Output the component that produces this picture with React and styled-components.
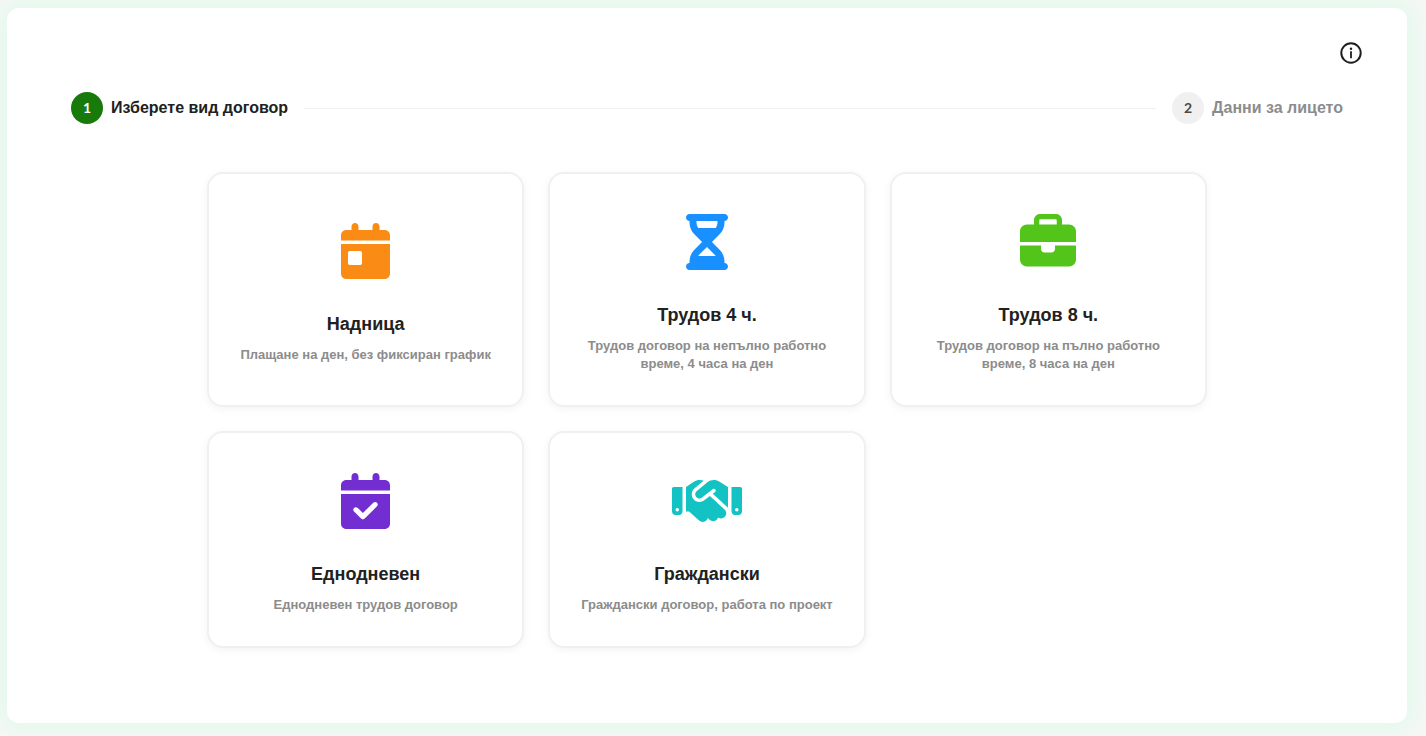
import styled, { createGlobalStyle } from 'styled-components';
import { useState } from 'react';
import {
  FaBriefcase,
  FaCalendarCheck,
  FaCalendarDay,
  FaHandshake,
  FaHourglassHalf,
} from 'react-icons/fa6';

const STEPS = ['Изберете вид договор', 'Данни за лицето'];

const CONTRACTS = [
  {
    id: 'daily-wage',
    title: 'Надница',
    description: 'Плащане на ден, без фиксиран график',
    color: '#fa8c16',
    icon: FaCalendarDay,
    iconWidth: 49,
  },
  {
    id: 'part-time',
    title: 'Трудов 4 ч.',
    description: 'Трудов договор на непълно работно време, 4 часа на ден',
    color: '#1890ff',
    icon: FaHourglassHalf,
    iconWidth: 42,
  },
  {
    id: 'full-time',
    title: 'Трудов 8 ч.',
    description: 'Трудов договор на пълно работно време, 8 часа на ден',
    color: '#52c41a',
    icon: FaBriefcase,
    iconWidth: 56,
  },
  {
    id: 'one-day',
    title: 'Еднодневен',
    description: 'Еднодневен трудов договор',
    color: '#722ed1',
    icon: FaCalendarCheck,
    iconWidth: 49,
  },
  {
    id: 'civil',
    title: 'Граждански',
    description: 'Граждански договор, работа по проект',
    color: '#13c2c2',
    icon: FaHandshake,
    iconWidth: 70,
  },
];

export default function App() {
  const [contract, setContract] = useState(null);

  return (
    <>
      <GlobalStyle />
      <Page>
        <Panel>
          <PanelHeader>
            <InfoButton type="button" aria-label="Информация">
              <InfoIcon />
            </InfoButton>
          </PanelHeader>

          <Steps>
            {STEPS.map((step, index) => (
              <Step key={step} $active={index === 0}>
                <StepNumber $active={index === 0}>{index + 1}</StepNumber>
                {step}
              </Step>
            ))}
          </Steps>

          <Cards>
            {CONTRACTS.map((item) => {
              const Icon = item.icon;

              return (
                <Card
                  key={item.id}
                  type="button"
                  aria-pressed={contract === item.id}
                  onClick={() => setContract(item.id)}
                >
                  <CardIcon $color={item.color} $width={item.iconWidth}>
                    <Icon />
                  </CardIcon>
                  <CardTitle>{item.title}</CardTitle>
                  <CardText>{item.description}</CardText>
                </Card>
              );
            })}
          </Cards>
        </Panel>
      </Page>
    </>
  );
}

function InfoIcon() {
  return (
    <svg viewBox="0 0 24 24" width="24" height="24" fill="none" aria-hidden="true">
      <circle cx="12" cy="12" r="9.7" stroke="currentColor" strokeWidth="2" />
      <circle cx="12" cy="7.7" r="1.2" fill="currentColor" />
      <path d="M12 10.2v7" stroke="currentColor" strokeWidth="1.8" />
    </svg>
  );
}

const GlobalStyle = createGlobalStyle`
  * {
    box-sizing: border-box;
  }

  body {
    margin: 0;
    background-color: #f6f7f6;
    color: #212121;
    font-family: 'Liberation Sans', Arial, sans-serif;
  }
`;

const Page = styled.main`
  min-height: 100vh;
  padding: 8px 19px 13px 7px;
  overflow: hidden;
`;

const Panel = styled.section`
  max-width: 1400px;
  padding: 33px 64px 75px;
  border-radius: 12px;
  background-color: #fff;
  box-shadow: 0 0 24px 6px #e0faea;
`;

const PanelHeader = styled.header`
  display: flex;
  justify-content: flex-end;
  margin: 0 -20px 27px 0;
`;

const InfoButton = styled.button`
  display: flex;
  padding: 0;
  border: none;
  background: none;
  color: #1f1f1f;
  cursor: pointer;
`;

const Steps = styled.ol`
  display: flex;
  margin: 0 0 48px;
  padding: 0;
  list-style: none;
`;

const Step = styled.li`
  display: flex;
  align-items: center;
  gap: 8px;
  font-size: 16px;
  font-weight: 700;
  line-height: 32px;
  white-space: nowrap;
  color: ${(props) => (props.$active ? '#212121' : '#8c8c8c')};

  &:not(:last-child) {
    flex: 1;
  }

  &:not(:last-child)::after {
    content: '';
    flex: 1;
    height: 1px;
    margin: 0 16px 0 8px;
    background-color: #f0f0f0;
  }
`;

const StepNumber = styled.span`
  width: 32px;
  height: 32px;
  border-radius: 50%;
  background-color: ${(props) => (props.$active ? '#177a0b' : '#f0f0f0')};
  color: ${(props) => (props.$active ? '#fff' : '#4a4a4a')};
  font-family: Lato, sans-serif;
  font-size: 14px;
  font-weight: 700;
  text-align: center;
`;

const Cards = styled.div`
  display: grid;
  grid-template-columns: repeat(3, 1fr);
  gap: 24px;
  max-width: 1000px;
  margin: 0 auto;
`;

const Card = styled.button`
  display: flex;
  flex-direction: column;
  align-items: center;
  justify-content: center;
  padding: 32px 24px;
  border: 2px solid #f0f0f0;
  border-radius: 16px;
  background-color: #fff;
  box-shadow: 0 2px 8px #0000000d;
  color: #212121;
  font-family: inherit;
  text-align: center;
  cursor: pointer;

  &:hover {
    border-color: #177a0b;
  }
`;

const CardIcon = styled.span`
  display: flex;
  padding: 8px 0;
  margin-bottom: 24px;
  color: ${(props) => props.$color};

  svg {
    width: ${(props) => props.$width}px;
    height: 56px;
  }
`;

const CardTitle = styled.span`
  margin-bottom: 8px;
  font-size: 18px;
  font-weight: 700;
  line-height: 27px;
`;

const CardText = styled.span`
  font-size: 13px;
  font-weight: 700;
  line-height: 18px;
  color: #8c8c8c;
`;
